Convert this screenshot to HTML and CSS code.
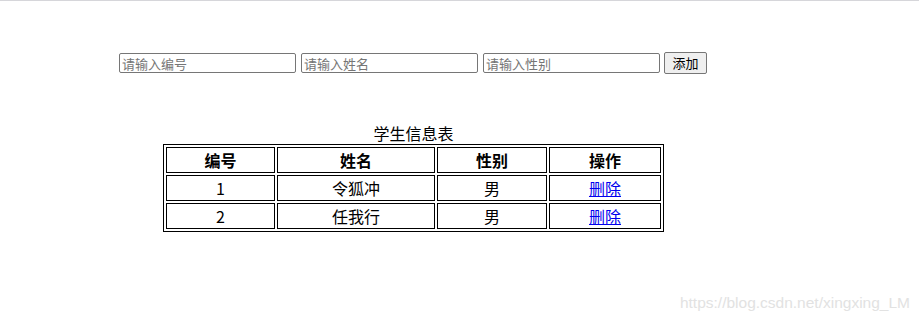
FILE: index.html
```html
<!DOCTYPE html>
<html lang="zh-CN">
<head>
<meta charset="utf-8">
<title>学生信息表</title>
<link rel="stylesheet" href="styles.css">
</head>
<body>
<div class="page">
  <div class="form-row">
    <input class="field" type="text" placeholder="请输入编号">
    <input class="field" type="text" placeholder="请输入姓名">
    <input class="field" type="text" placeholder="请输入性别">
    <button class="add-btn" type="button">添加</button>
  </div>
  <table class="students">
    <caption class="caption">学生信息表</caption>
    <colgroup>
      <col class="c1"><col class="c2"><col class="c3"><col class="c4">
    </colgroup>
    <thead>
      <tr><th>编号</th><th>姓名</th><th>性别</th><th>操作</th></tr>
    </thead>
    <tbody>
      <tr><td>1</td><td>令狐冲</td><td>男</td><td><a class="del" href="#">删除</a></td></tr>
      <tr><td>2</td><td>任我行</td><td>男</td><td><a class="del" href="#">删除</a></td></tr>
    </tbody>
  </table>
</div>
<div class="watermark">https://blog.csdn.net/xingxing_LM</div>
</body>
</html>
```
FILE: styles.css
```css
html, body {
  margin: 0;
  padding: 0;
  background: #ffffff;
}
body {
  border-top: 1px solid #d6d6da;
  font-family: "Noto Sans CJK SC", "Noto Sans", sans-serif;
  color: #000;
  height: 322px;
  position: relative;
  overflow: hidden;
}
.page {
  padding-top: 51px;
}
.form-row {
  display: flex;
  align-items: center;
  gap: 5px;
  margin-left: 119px;
  height: 22px;
}
.field {
  box-sizing: border-box;
  width: 177px;
  height: 20px;
  margin: 0;
  padding: 1px 2px;
  border: 1px solid #767676;
  border-radius: 2px;
  font-family: "Noto Sans CJK SC", sans-serif;
  font-size: 13px;
  line-height: 16px;
  color: #000;
  background: #fff;
}
.field::placeholder {
  color: #757575;
}
.add-btn {
  box-sizing: border-box;
  height: 22px;
  width: 43px;
  margin: 0 0 0 -1px;
  padding: 0 6px;
  border: 1px solid #767676;
  border-radius: 2px;
  background: #efefef;
  font-family: "Noto Sans CJK SC", sans-serif;
  font-size: 13px;
  line-height: 18px;
  color: #000;
}
.students {
  margin-top: 48px;
  margin-left: 163px;
  width: 500px;
  table-layout: fixed;
  border-collapse: separate;
  border-spacing: 2px;
  border: 1px solid #000;
  font-size: 16px;
}
.caption {
  line-height: 22px;
  text-align: center;
}
.c1 { width: 109px; }
.c2 { width: 158px; }
.c3 { width: 110px; }
.c4 { width: 112px; }
.students th,
.students td {
  box-sizing: border-box;
  height: 26px;
  border: 1px solid #000;
  padding: 0 1px;
  line-height: 22px;
  text-align: center;
}
.students th {
  font-weight: bold;
}
.del {
  color: #0000ee;
  text-decoration: underline;
}
.watermark {
  position: absolute;
  right: 9px;
  top: 293px;
  font-family: "Liberation Sans", Arial, sans-serif;
  font-size: 15.5px;
  color: #e2e2e2;
  white-space: nowrap;
}
```
